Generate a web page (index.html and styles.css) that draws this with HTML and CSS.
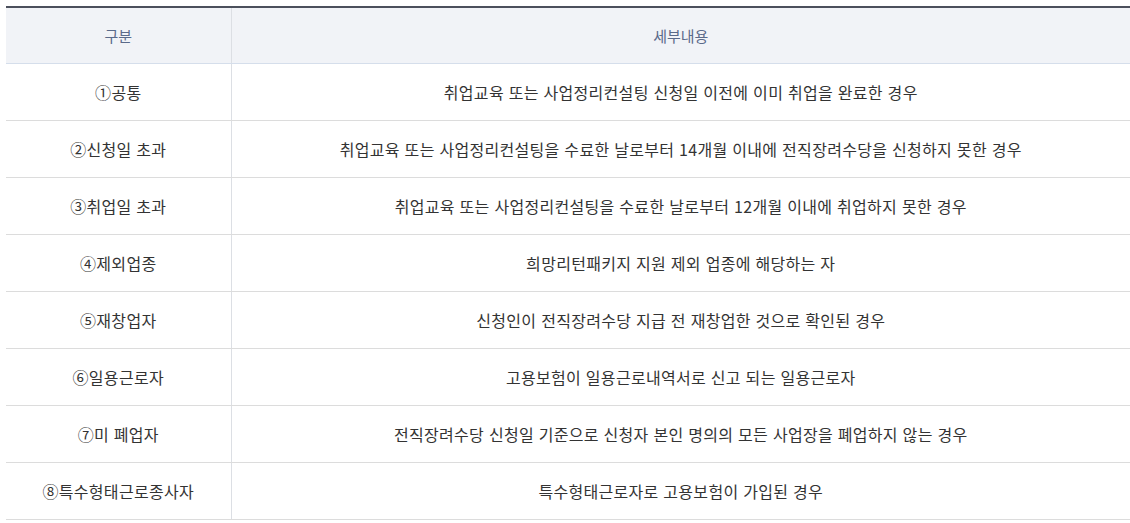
FILE: index.html
```html
<!DOCTYPE html>
<html lang="ko">
<head>
<meta charset="utf-8">
<link rel="stylesheet" href="styles.css">
</head>
<body>
<div class="wrap">
<table class="tbl">
  <colgroup><col class="c1"><col class="c2"></colgroup>
  <thead>
    <tr><th>구분</th><th>세부내용</th></tr>
  </thead>
  <tbody>
    <tr><td>①공통</td><td>취업교육 또는 사업정리컨설팅 신청일 이전에 이미 취업을 완료한 경우</td></tr>
    <tr><td>②신청일 초과</td><td>취업교육 또는 사업정리컨설팅을 수료한 날로부터 14개월 이내에 전직장려수당을 신청하지 못한 경우</td></tr>
    <tr><td>③취업일 초과</td><td>취업교육 또는 사업정리컨설팅을 수료한 날로부터 12개월 이내에 취업하지 못한 경우</td></tr>
    <tr><td>④제외업종</td><td>희망리턴패키지 지원 제외 업종에 해당하는 자</td></tr>
    <tr><td>⑤재창업자</td><td>신청인이 전직장려수당 지급 전 재창업한 것으로 확인된 경우</td></tr>
    <tr><td>⑥일용근로자</td><td>고용보험이 일용근로내역서로 신고 되는 일용근로자</td></tr>
    <tr><td>⑦미 폐업자</td><td>전직장려수당 신청일 기준으로 신청자 본인 명의의 모든 사업장을 폐업하지 않는 경우</td></tr>
    <tr><td>⑧특수형태근로종사자</td><td>특수형태근로자로 고용보험이 가입된 경우</td></tr>
  </tbody>
</table>
</div>
</body>
</html>
```
FILE: styles.css
```css
html, body {
  margin: 0;
  padding: 0;
  background: #fff;
}
.wrap {
  padding: 6px 0 0 6px;
}
.tbl {
  width: 1124px;
  border-collapse: collapse;
  table-layout: fixed;
  font-family: "Noto Sans CJK KR", "Noto Sans", sans-serif;
  border-top: 2px solid #4b505c;
}
.c1 { width: 225px; }
.tbl th {
  height: 55px;
  padding: 0;
  background: #f1f3f7;
  color: #5a6a8a;
  font-size: 15px;
  font-weight: 400;
  border-bottom: 1px solid #d5deeb;
  text-align: center;
}
.tbl th + th, .tbl td + td {
  border-left: 1px solid #dcdfe4;
}
.tbl td {
  height: 56px;
  padding: 0;
  color: #333;
  font-size: 16px;
  letter-spacing: 0.3px;
  text-align: center;
  border-bottom: 1px solid #dcdcdc;
}
```
